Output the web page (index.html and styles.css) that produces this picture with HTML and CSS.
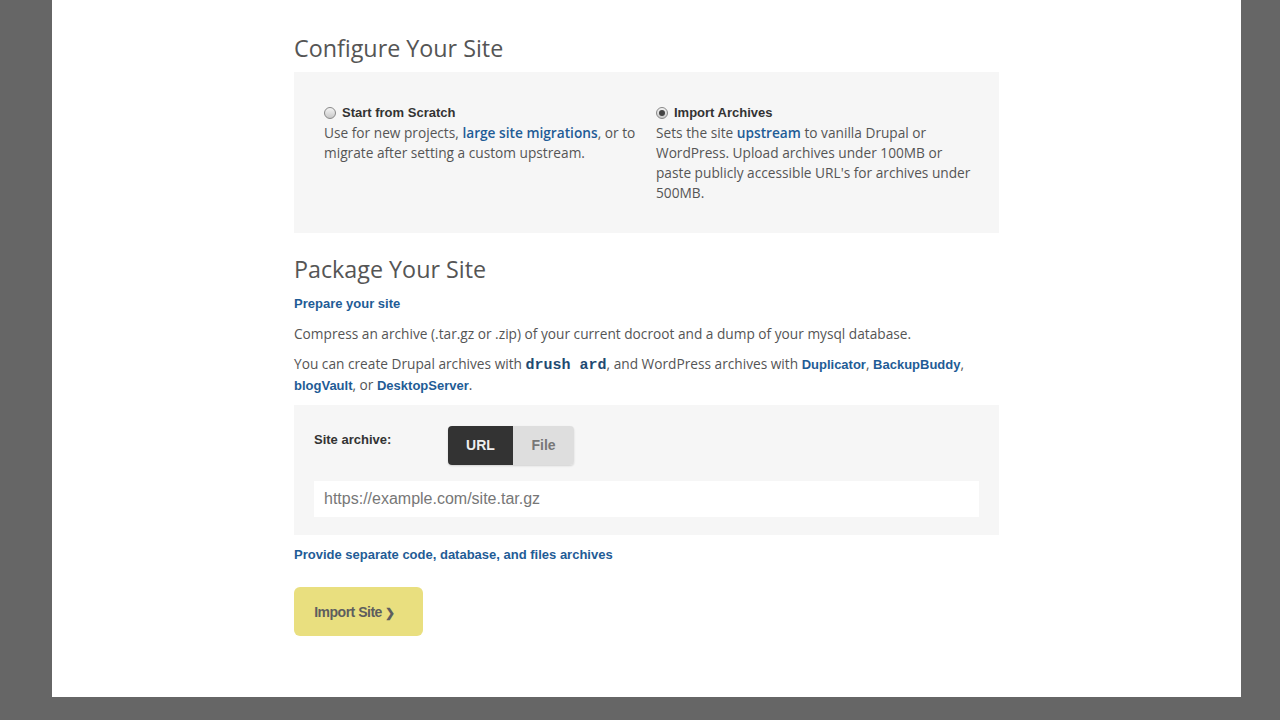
FILE: index.html
```
<!DOCTYPE html>
<html lang="en">
<head>
    <meta charset="UTF-8">
    <title>Configure Your Site</title>
    <link rel="stylesheet" href="styles.css">
</head>
<body>
    <div class="panel">
        <div class="content">
            <h1>Configure Your Site</h1>
            <div class="box choices">
                <div class="choice">
                    <div class="choice-title"><span class="radio"></span>Start from Scratch</div>
                    <p>Use for new projects, <a href="#">large site migrations</a>, or to migrate after setting a custom upstream.</p>
                </div>
                <div class="choice">
                    <div class="choice-title"><span class="radio checked"></span>Import Archives</div>
                    <p>Sets the site <a href="#">upstream</a> to vanilla Drupal or WordPress. Upload archives under 100MB or paste publicly accessible URL's for archives under 500MB.</p>
                </div>
            </div>

            <h1 class="second">Package Your Site</h1>
            <a class="strong-link prepare" href="#">Prepare your site</a>
            <p class="text">Compress an archive (.tar.gz or .zip) of your current docroot and a dump of your mysql database.</p>
            <p class="text">You can create Drupal archives with <code>drush ard</code>, and WordPress archives with <a class="bold" href="#">Duplicator</a>, <a class="bold" href="#">BackupBuddy</a>, <a class="bold" href="#">blogVault</a>, or <a class="bold" href="#">DesktopServer</a>.</p>

            <div class="box archive">
                <div class="archive-row">
                    <label>Site archive:</label>
                    <div class="toggle">
                        <span class="toggle-btn active">URL</span>
                        <span class="toggle-btn">File</span>
                    </div>
                </div>
                <input type="text" class="url-input" placeholder="https://example.com/site.tar.gz">
            </div>

            <a class="strong-link separate" href="#">Provide separate code, database, and files archives</a>

            <button class="import">Import Site <span class="chev">&#x276F;</span></button>
        </div>
    </div>
</body>
</html>
```

FILE: styles.css
```
body {
    margin: 0;
    background: #666666;
    font-family: "Open Sans", Arial, sans-serif;
    color: #555;
}
.panel {
    background: #fff;
    margin-left: 52px;
    width: 1189px;
    height: 697px;
    padding-top: 33px;
    box-sizing: border-box;
}
.content {
    margin-left: 242px;
    width: 705px;
}
h1 {
    font-size: 23.3px;
    font-weight: 400;
    line-height: 30px;
    margin: 0;
    color: #555;
}
h1.second {
    margin-top: 21px;
}
.box {
    background: #f6f6f6;
}
.choices {
    margin-top: 9px;
    padding: 31px 20px 30px 30px;
    display: grid;
    grid-template-columns: 322px 1fr;
    column-gap: 10px;
}
.choice-title {
    font-family: "Liberation Sans", Arial, sans-serif;
    font-weight: bold;
    font-size: 13px;
    line-height: 20px;
    color: #333;
    display: flex;
    align-items: center;
}
.radio {
    display: inline-block;
    width: 10px;
    height: 10px;
    border-radius: 50%;
    border: 1px solid #888;
    background: linear-gradient(#f4f4f4, #c8c8c8);
    margin-right: 6px;
    position: relative;
}
.radio.checked::after {
    content: "";
    position: absolute;
    left: 2px;
    top: 2px;
    width: 6px;
    height: 6px;
    border-radius: 50%;
    background: #444;
}
.choice p {
    margin: 0;
    font-size: 13.7px;
    line-height: 20px;
}
a {
    color: #1f5c96;
    text-decoration: none;
    font-weight: 600;
}
a.bold {
    font-family: "Liberation Sans", Arial, sans-serif;
    font-weight: bold;
    font-size: 13px;
}
.strong-link {
    display: block;
    font-family: "Liberation Sans", Arial, sans-serif;
    font-weight: bold;
    font-size: 13px;
    line-height: 20px;
}
.prepare {
    margin-top: 10px;
}
.text {
    margin: 10px 0 0;
    font-size: 13.7px;
    line-height: 20px;
}
code {
    font-family: "Liberation Mono", "Courier New", monospace;
    font-weight: bold;
    font-size: 15px;
    line-height: 0;
    color: #1e4a72;
}
.archive {
    margin-top: 9px;
    padding: 21px 20px 18px;
}
.archive-row {
    display: flex;
    align-items: flex-start;
}
.archive-row label {
    width: 134px;
    font-family: "Liberation Sans", Arial, sans-serif;
    font-weight: bold;
    font-size: 13px;
    color: #333;
    line-height: 28px;
}
.toggle {
    display: flex;
    border-radius: 4px;
    overflow: hidden;
    box-shadow: 0 1px 2px rgba(0, 0, 0, 0.15);
}
.toggle-btn {
    font-family: "Liberation Sans", Arial, sans-serif;
    font-weight: bold;
    font-size: 14px;
    line-height: 39px;
    height: 39px;
    width: 61px;
    text-align: center;
    background: #dedede;
    color: #777;
}
.toggle-btn.active {
    width: 65px;
    background: #333;
    color: #eee;
}
.url-input {
    display: block;
    margin-top: 16px;
    width: 100%;
    height: 36px;
    box-sizing: border-box;
    border: none;
    background: #fff;
    padding: 0 10px;
    font-family: "Liberation Sans", Arial, sans-serif;
    font-size: 16px;
    color: #555;
    outline: none;
}
.url-input::placeholder {
    color: #777;
}
.separate {
    margin-top: 10px;
}
.import {
    margin-top: 22px;
    width: 129px;
    height: 49px;
    background: #e9df7f;
    border: none;
    border-radius: 6px;
    font-family: "Liberation Sans", Arial, sans-serif;
    font-weight: bold;
    font-size: 14px;
    color: #5e5e5e;
    letter-spacing: -0.5px;
    padding: 0 8px 0 0;
}
.chev {
    font-size: 12px;
}
```
